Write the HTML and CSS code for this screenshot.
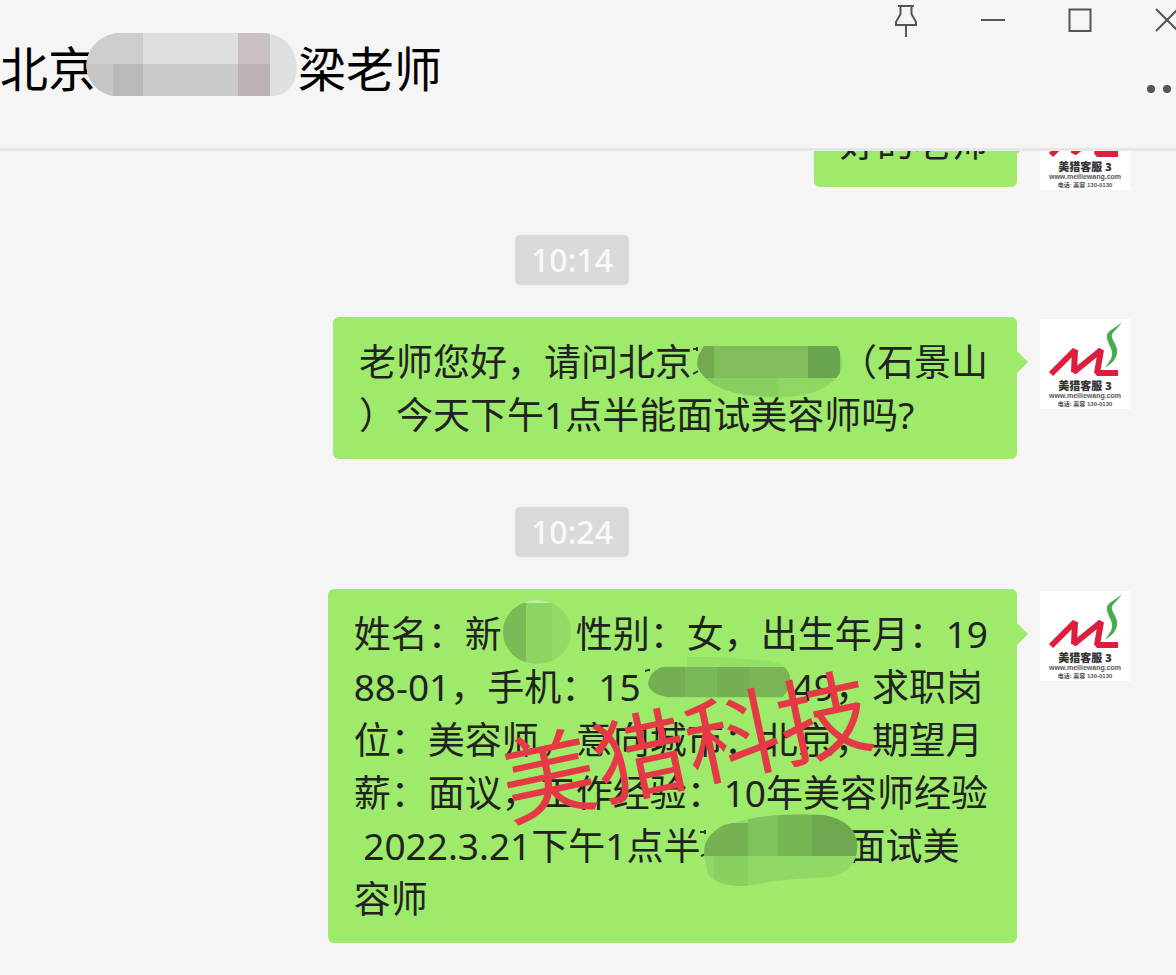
FILE: index.html
```html
<!DOCTYPE html>
<html lang="zh-CN">
<head>
	<meta charset="utf-8">
	<title>梁老师</title>
	<link rel="stylesheet" href="styles.css">
</head>
<body>
	<!-- logo shared by all avatars -->
	<svg class="defs" width="0" height="0" aria-hidden="true">
		<symbol id="logo" viewBox="0 0 90 90">
			<path d="M11 55 L35 31 L34 53 L61 31 L57 54 L78 54" fill="none" stroke="#dc1f3c" stroke-width="6" stroke-linejoin="bevel"/>
			<path d="M82 3 C76 12 71 13 72 18 C73 23 78 27 77 34 C76 42 69 46 65 49 C69 43 73 38 72 33 C71 27 66 22 67 16 C68 11 76 9 82 3Z" fill="#43ae4b"/>
		</symbol>
	</svg>

	<header>
		<div class="controls">
			<button aria-label="置顶">
				<svg width="24" height="34" viewBox="0 0 24 34"><path d="M4 2H20M6.500 2V10L2 18V21H22V18L17.500 10V2M12 21V33"/></svg>
			</button>
			<button aria-label="最小化">
				<svg width="24" height="34" viewBox="0 0 24 34"><path d="M0 16H24"/></svg>
			</button>
			<button aria-label="最大化">
				<svg width="24" height="34" viewBox="0 0 24 34"><path d="M1.500 5.500H22.500V27H1.500Z"/></svg>
			</button>
			<button aria-label="关闭">
				<svg width="24" height="34" viewBox="0 0 24 34"><path d="M1 5L23 27M23 5L1 27"/></svg>
			</button>
		</div>
		<div class="title-row">
			<h1>北京<span class="mask mask-title"><svg width="212" height="66" viewBox="0 0 212 66">
				<defs><clipPath id="c0"><path d="M32 1H176C222 1 222 64 186 64H28C-8 56 -8 8 32 1Z"/></clipPath></defs>
				<g clip-path="url(#c0)">
					<path d="M0 0H212V66H0Z" fill="#dfdfdf"/>
					<path d="M0 0H58V66H0Z" fill="#cdcdcd"/>
					<path d="M0 32H28V66H0Z" fill="#c6c6c6"/>
					<path d="M28 32H58V66H28Z" fill="#b9b9b9"/>
					<path d="M58 32H153V66H58Z" fill="#cbcbcb"/>
					<path d="M153 0H185V32H153Z" fill="#c8c0c2"/>
					<path d="M153 32H185V66H153Z" fill="#bdb3b6"/>
				</g>
			</svg></span>梁老师</h1>
			<button class="more" aria-label="更多">
				<svg width="40" height="16" viewBox="0 0 40 16"><circle cx="4" cy="8" r="4"/><circle cx="20" cy="8" r="4"/><circle cx="36" cy="8" r="4"/></svg>
			</button>
		</div>
	</header>

	<main>
		<div class="message">
			<div class="bubble">好的老师</div>
			<svg class="avatar" viewBox="0 0 90 90">
				<use href="#logo"/>
				<text x="45" y="71" class="logo-name">美猎客服 3</text>
				<text x="45" y="79" class="logo-url">www.meiliewang.com</text>
				<text x="45" y="87" class="logo-tel">电话: 美容 130-0130</text>
			</svg>
		</div>
		<time>10:14</time>
		<div class="message">
			<div class="bubble">
				老师您好，请问北京<span class="mask mask-shop"><svg width="160" height="62" viewBox="0 0 160 62">
					<defs><clipPath id="c1"><path d="M12 10H145Q152 22 150 31C147 46 126 61 86 61C36 61 14 48 6 32Q3 22 12 10Z"/></clipPath></defs>
					<path d="M1 13H6M5 11V15M1 38L6 35" class="bit"/>
					<g clip-path="url(#c1)">
						<path d="M0 0H160V62H0Z" fill="#8dd763"/>
						<path d="M0 10H22V42H0Z" fill="#72a951"/>
						<path d="M22 10H116V42H22Z" fill="#81bd5a"/>
						<path d="M116 10H148V42H116Z" fill="#69a54f"/>
						<path d="M0 42H22V62H0Z" fill="#84c85e"/>
						<path d="M22 42H86V62H22Z" fill="#88cf60"/>
					</g>
				</svg></span>（石景山<br>
				）今天下午1点半能面试美容师吗?
			</div>
			<svg class="avatar" viewBox="0 0 90 90">
				<use href="#logo"/>
				<text x="45" y="71" class="logo-name">美猎客服 3</text>
				<text x="45" y="79" class="logo-url">www.meiliewang.com</text>
				<text x="45" y="87" class="logo-tel">电话: 美容 130-0130</text>
			</svg>
		</div>
		<time>10:24</time>
		<div class="message">
			<div class="bubble">
				姓名：新<span class="mask mask-name"><svg width="76" height="70" viewBox="0 0 76 70">
					<defs><clipPath id="c2"><ellipse cx="35" cy="36" rx="34" ry="32"/></clipPath></defs>
					<g clip-path="url(#c2)">
						<path d="M0 0H76V70H0Z" fill="#8bd562"/>
						<path d="M0 0H24V70H0Z" fill="#7bba57"/>
						<path d="M50 0H76V70H50Z" fill="#91dc66"/>
						<path d="M0 0H76V7H0Z" fill="#bdee9f"/>
					</g>
				</svg></span>性别：女，出生年月：19<br>
				88-01，手机：15<span class="mask mask-phone"><svg width="160" height="56" viewBox="0 0 160 56">
					<defs><clipPath id="c3"><path d="M20 11H42V2H70L126 6Q143 10 145 23Q145 34 137 43H36Q6 43 3 29Q5 15 20 11Z"/></clipPath></defs>
					<path d="M-2 18Q0 15 5 15M138 16Q145 18 144 27Q143 35 138 38" class="bit"/>
					<g clip-path="url(#c3)">
						<path d="M0 0H160V56H0Z" fill="#95df67"/>
						<path d="M0 12H160V42H0Z" fill="#74af53"/>
						<path d="M40 12H72V42H40Z" fill="#7bb858"/>
						<path d="M104 12H160V42H104Z" fill="#7ab456"/>
					</g>
				</svg></span>49，求职岗<br>
				位：美容师，意向城市：北京，期望月<br>
				薪：面议，工作经验：10年美容师经验<br>
				&nbsp;2022.3.21下午1点半<span class="mask mask-place"><svg width="160" height="76" viewBox="0 0 160 76">
					<defs><clipPath id="c4"><path d="M24 12Q42 8 54 5Q80 0 124 2Q154 8 157 29Q160 56 132 64Q82 66 62 70Q26 79 8 62L5 45Q0 25 24 12Z"/></clipPath></defs>
					<path d="M0 19H6M5 17V21M1 43L6 41" class="bit"/>
					<g clip-path="url(#c4)">
						<path d="M0 0H160V76H0Z" fill="#8fd965"/>
						<path d="M0 10H48V43H0Z" fill="#76b154"/>
						<path d="M48 0H78V43H48Z" fill="#80c25b"/>
						<path d="M78 0H112V43H78Z" fill="#76b554"/>
						<path d="M112 0H160V43H112Z" fill="#6da84f"/>
						<path d="M14 43H48V76H14Z" fill="#88d160"/>
					</g>
				</svg></span>面试美<br>
				容师
				<div class="watermark">美猎科技</div>
			</div>
			<svg class="avatar" viewBox="0 0 90 90">
				<use href="#logo"/>
				<text x="45" y="71" class="logo-name">美猎客服 3</text>
				<text x="45" y="79" class="logo-url">www.meiliewang.com</text>
				<text x="45" y="87" class="logo-tel">电话: 美容 130-0130</text>
			</svg>
		</div>
	</main>
</body>
</html>
```

FILE: styles.css
```css
body {
	margin: 0;
	background-color: #f5f5f5;
	color: #222;
	font-family: "Noto Sans", "Noto Sans CJK SC", sans-serif;
	overflow: hidden;
}
.defs {
	position: absolute;
}
button {
	padding: 0;
	border: none;
	background: none;
}
button svg {
	display: block;
	fill: none;
	stroke: #555;
	stroke-width: 2;
}

/* window header */
header {
	padding-bottom: 51px;
	border-bottom: 3px solid #e6e6e6;
}
.controls {
	display: flex;
	justify-content: flex-end;
	align-items: flex-start;
	gap: 63px;
	height: 37px;
	padding-top: 4px;
	margin-right: -3px;
}
.title-row {
	display: flex;
	justify-content: space-between;
	align-items: flex-end;
}
h1 {
	margin: 0;
	font-size: 48px;
	font-weight: 400;
	line-height: 56px;
	color: #000;
	white-space: nowrap;
}
.more {
	margin-right: -11px;
}
.more svg {
	fill: #555;
	stroke: none;
}

/* chat */
main {
	display: flex;
	flex-direction: column;
	padding-right: 32px;
	overflow: hidden;
}
.message {
	display: flex;
	justify-content: flex-end;
	gap: 23px;
	padding-right: 14px;
}
.message:first-child {
	margin-top: -53px;
}
.bubble {
	position: relative;
	padding: 18px 29px 18px 26px;
	border-radius: 6px;
	background-color: #9eea6a;
	font-size: 37px;
	line-height: 53px;
	white-space: nowrap;
	text-spacing-trim: space-all;
}
.bubble::after {
	content: "";
	position: absolute;
	top: 34px;
	left: 100%;
	border: 11px solid transparent;
	border-left-color: #9eea6a;
	border-right: none;
}
.avatar {
	width: 90px;
	height: 90px;
	margin: 2px 0 -3px;
	background-color: #fff;
	text-anchor: middle;
}
.logo-name {
	font-size: 11px;
	font-weight: 900;
	fill: #333;
}
.logo-url {
	font-family: "Liberation Sans", sans-serif;
	font-size: 7px;
	font-weight: 600;
	fill: #555;
}
.logo-tel {
	font-family: "Liberation Sans", "Noto Sans CJK SC", sans-serif;
	font-size: 6px;
	font-weight: 600;
	fill: #555;
}
time {
	align-self: center;
	margin: 48px 0 32px;
	padding: 0 16px;
	border-radius: 5px;
	background-color: #dadada;
	color: #f9f9f9;
	font-size: 32px;
	font-weight: 500;
	line-height: 50px;
}

/* smudges painted over private details */
.mask {
	display: inline-block;
	position: relative;
	height: 37px;
	vertical-align: middle;
}
.mask svg {
	position: absolute;
	left: 0;
	top: -12px;
}
.mask-title {
	width: 202px;
}
.mask-title svg {
	left: -11px;
	top: -24px;
}
.mask-shop,
.mask-place {
	width: 148px;
}
.mask-place svg {
	top: -19px;
}
.mask-name {
	width: 74px;
}
.mask-name svg {
	top: -24px;
}
.mask-phone {
	width: 152px;
}
.mask-phone svg {
	left: 4px;
	top: -18px;
}
.bit {
	fill: none;
	stroke: #333;
	stroke-width: 2;
}
.watermark {
	position: absolute;
	left: 170px;
	top: 110px;
	color: #e63946;
	font-size: 94px;
	font-weight: 400;
	line-height: 94px;
	transform: rotate(-12deg);
}
```
